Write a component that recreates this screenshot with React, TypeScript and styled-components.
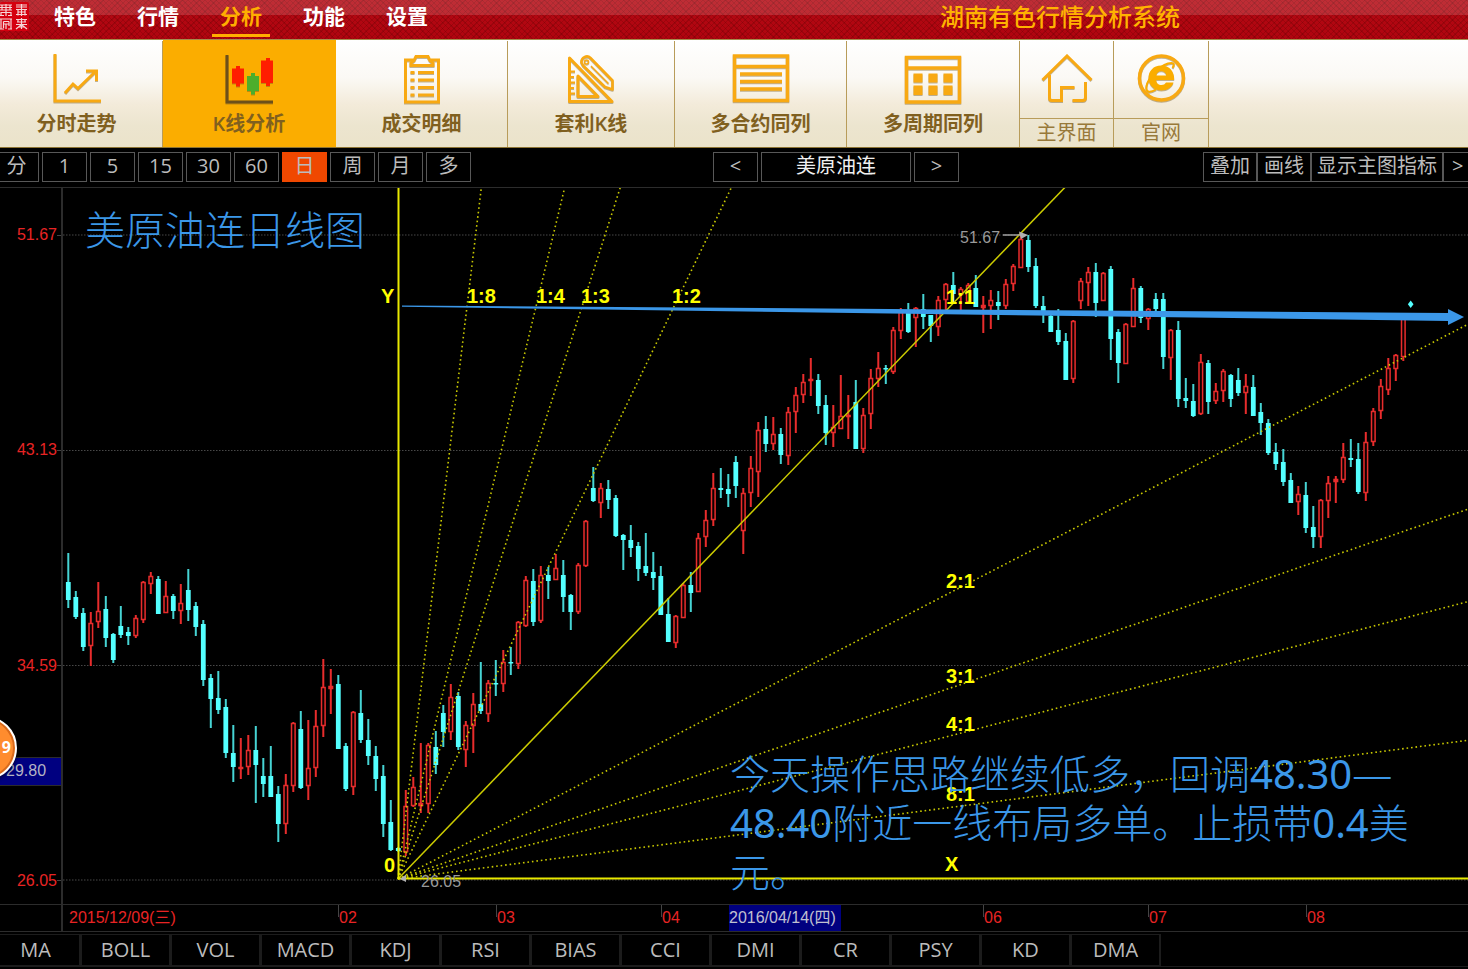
import React from 'react';
import styled, { createGlobalStyle, css } from 'styled-components';

const GlobalStyle = createGlobalStyle`
  * { box-sizing: border-box; }
  body {
    margin: 0;
    background: #000;
    font-family: "Open Sans", "Noto Sans CJK SC", sans-serif;
    font-size: 20px;
  }
  button { font: inherit; margin: 0; padding: 0; cursor: pointer; white-space: nowrap; }
`;

const GOLD = '#f8a913';
const GOLD_LINE = '#b89c5a';
const FRAME = '#2c2c2c';
const ANNOTATION = '#3b97e8';

/* ---------- layout ---------- */

const Page = styled.div`
  position: relative;
  min-height: 100vh;
  overflow: hidden;
  background: #000;
  display: flex;
  flex-direction: column;
`;

const Header = styled.header`
  height: 40px;
  display: flex;
  align-items: flex-start;
  border-bottom: 1px solid #a58c4c;
  background:
    linear-gradient(to bottom, rgba(255, 255, 255, 0.14) 0 15px, transparent 15px),
    repeating-linear-gradient(45deg, rgba(80, 0, 0, 0.22) 0 1px, transparent 1px 4px),
    repeating-linear-gradient(-45deg, rgba(80, 0, 0, 0.22) 0 1px, transparent 1px 4px),
    linear-gradient(to bottom, #b40a14, #b0040f);
`;

const Nav = styled.nav`
  display: flex;
  gap: 25px;
  margin-left: 16px;
`;

const NavLink = styled.a<{ $active?: boolean }>`
  width: 58px;
  height: 37px;
  line-height: 32px;
  text-align: center;
  text-decoration: none;
  font-size: 21px;
  font-weight: 700;
  color: ${p => (p.$active ? '#ffae00' : '#fff')};
  border-bottom: 3px solid ${p => (p.$active ? '#ffae00' : 'transparent')};
`;

const SystemTitle = styled.h1`
  margin: 0 288px 0 auto;
  font-size: 24px;
  line-height: 34px;
  font-weight: 500;
  color: #ffb300;
`;

const Toolbar = styled.div`
  height: 108px;
  padding-top: 1px;
  display: flex;
  background: linear-gradient(to bottom, #fff 0%, #fbf9f5 35%, #f3ebda 60%, #ece5cf 80%, #ebe3ca 100%);
  border-bottom: 1px solid #8d7433;
`;

const ToolGroup = styled.div`
  display: flex;
  margin-left: -9px;
`;

const Tool = styled.button<{ $width: number; $active?: boolean }>`
  width: ${p => p.$width}px;
  padding-top: 13px;
  display: flex;
  flex-direction: column;
  align-items: center;
  border: 0;
  border-right: 1px solid ${GOLD_LINE};
  background: ${p => (p.$active ? '#fbad00' : 'transparent')};
  color: #80601f;
  font-weight: 600;
  line-height: 40px;
  ${p => p.$active && css`margin-top: -1px; padding-top: 14px; border-color: #fbad00;`}
`;

const LinkTool = styled.button<{ $width: number }>`
  width: ${p => p.$width}px;
  display: flex;
  flex-direction: column;
  border: 0;
  border-right: 1px solid ${GOLD_LINE};
  background: transparent;
  color: #98793a;
`;

const LinkIcon = styled.span`
  height: 79px;
  width: 100%;
  padding-top: 13px;
  display: flex;
  justify-content: center;
  border-bottom: 1px solid ${GOLD_LINE};
`;

const LinkLabel = styled.span`
  width: 100%;
  line-height: 28px;
`;

const Icon = styled.svg`
  display: block;
  flex: none;
  height: 50px;
  fill: none;
  stroke: ${GOLD};
  filter: drop-shadow(0 1px 0 rgba(120, 90, 30, 0.45));
`;

const PeriodBar = styled.div`
  height: 39px;
  padding-top: 4px;
  display: flex;
`;

const ButtonGroup = styled.div<{ $gap: number }>`
  display: flex;
  gap: ${p => p.$gap}px;
`;

const PeriodGroup = styled(ButtonGroup)`
  margin-left: -6px;
`;

const SymbolGroup = styled(ButtonGroup)`
  margin-left: 242px;
`;

const OptionGroup = styled(ButtonGroup)`
  margin-left: auto;
`;

const BoxButton = styled.button<{ $width?: number; $active?: boolean; $bright?: boolean }>`
  width: ${p => p.$width ?? 45}px;
  height: 30px;
  padding-bottom: 2px;
  line-height: 24px;
  overflow: hidden;
  border: 1px solid ${p => (p.$active ? '#f04800' : '#585858')};
  background: ${p => (p.$active ? '#f04800' : '#000')};
  color: ${p => (p.$bright ? '#f0f0f0' : '#bcbcbc')};
`;

const MoreButton = styled(BoxButton)`
  border-right: 0;
  padding-left: 8px;
  text-align: left;
`;

const ChartArea = styled.main`
  display: grid;
  grid-template-columns: 63px minmax(0, 1fr);
  grid-template-rows: 716px 27px;
  border-top: 1px solid ${FRAME};
  border-bottom: 1px solid ${FRAME};
  font-family: "Liberation Sans", "Noto Sans CJK SC", sans-serif;
  font-size: 16px;
  color: #e82424;
`;

const PriceAxis = styled.div`
  position: relative;
  padding: 37px 0 13px;
  display: flex;
  flex-direction: column;
  justify-content: space-between;
  border-right: 2px solid ${FRAME};
`;

const PriceLabel = styled.div`
  height: 20px;
  display: flex;
  align-items: center;
  justify-content: flex-end;
  &::after {
    content: '';
    width: 4px;
    height: 1px;
    background: #444;
  }
`;

const PriceMarker = styled.div`
  position: absolute;
  left: 0;
  right: 0;
  top: 569px;
  height: 29px;
  padding-left: 6px;
  line-height: 26px;
  background: #000080;
  border-top: 1px solid ${FRAME};
  border-bottom: 1px solid ${FRAME};
  color: #b4b4c4;
`;

const Plot = styled.div`
  position: relative;
  overflow: hidden;
`;

const PlotSvg = styled.svg`
  display: block;
  width: 100%;
  height: 100%;
`;

const Annotation = styled.p<{ $left: number; $top: number }>`
  position: absolute;
  left: ${p => p.$left}px;
  top: ${p => p.$top}px;
  margin: 0;
  font-family: "Noto Sans", "Noto Sans CJK SC", sans-serif;
  font-size: 40px;
  font-weight: 300;
  line-height: 49px;
  white-space: nowrap;
  color: ${ANNOTATION};
`;

const Figure = styled.span`
  font-weight: 400;
`;

const AxisCorner = styled.div`
  border-top: 1px solid ${FRAME};
  border-right: 2px solid ${FRAME};
`;

const DateAxis = styled.div`
  display: grid;
  grid-template-columns: 275px 158px 165px 68px 254px 165px 158px minmax(0, 1fr);
  overflow: hidden;
  border-top: 1px solid ${FRAME};
  line-height: 26px;
`;

const DateCell = styled.div<{ $tick?: boolean }>`
  padding-left: ${p => (p.$tick ? 1 : 6)}px;
  background: ${p => (p.$tick ? `linear-gradient(#444, #444) 0 0 / 1px 12px no-repeat` : 'none')};
`;

const SelectedDate = styled.span`
  display: block;
  width: 112px;
  background: #000080;
  color: #c0c0d0;
`;

const IndicatorBar = styled.div`
  padding: 2px 0 0;
  display: flex;
  border-bottom: 1px solid #1c1c1c;
`;

const IndicatorGroup = styled.div`
  display: flex;
  margin-left: -9px;
`;

const IndicatorButton = styled.button`
  width: 90px;
  height: 32px;
  line-height: 28px;
  border: 1px solid #1c1c1c;
  border-right-width: 2px;
  background: #000;
  color: #bcbcbc;
`;

const FloatBadge = styled.button`
  position: absolute;
  left: -47px;
  top: 716px;
  width: 64px;
  height: 64px;
  padding: 0 4px 2px 0;
  text-align: right;
  border: 2px solid #fff;
  border-radius: 50%;
  background: #ff8c2e;
  box-shadow: inset 0 0 0 2px #d86a1c, 0 1px 4px rgba(0, 0, 0, 0.7);
  color: #fff;
  font-size: 16px;
  font-weight: 700;
`;

/* ---------- icons ---------- */

const SealLogo = () => (
  <svg width="30" height="32" viewBox="0 0 30 32" aria-hidden="true">
    <rect x="0" y="2" width="29" height="29" rx="2" fill="#d5000f" />
    <g stroke="#f6d6d8" strokeWidth="1.200" fill="none">
      <path d="M0 5H12M0 7.500H12M2 5V10M6 4V16M10 5V10M0 10H12M1 12.500H11M1 12V16M11 12V16M0 15.500H4M8 15.500H12" />
      <path d="M16 5H27M21.500 4V9M16 7H27M16 9.500H27M18 12H25M18 9.500V15.500M25 9.500V15.500M16 14.500H27M21.500 9.500V16" />
      <path d="M0 19H12M1 19V29M11 19V29M3.500 21.500H9M3.500 24H9M3.500 21.500V28M9 21.500V26M6 24V29M0 29H4M8 29H12" />
      <path d="M16 19.500H27M21.500 18V29M17 22H26M16 24.500H27M18 27H25M16 29L21 25M27 29L22 25M18 19V22M25 19V22" />
    </g>
  </svg>
);

const TrendIcon = () => (
  <Icon width="48" viewBox="0 0 48 50" strokeWidth="3">
    <path d="M2 0V47H48" />
    <path d="M12 39L20 30L25 34.500L42.500 17.500M33 17H43.500V27" />
  </Icon>
);

const CandleIcon = () => (
  <Icon width="48" viewBox="0 0 48 50" strokeWidth="2.500">
    <path d="M2 1V48H48" stroke="#6d501a" strokeWidth="3" />
    <g stroke="none">
      <path d="M11 12h4v2.500h4v15h-4v3h-4v-3h-4v-15h4z" fill="#ff1e00" />
      <path d="M26 19h4v3h4v15h-4v3.500h-4v-3.500h-4v-15h4z" fill="#4cae2c" />
      <path d="M41 4h4v2.500h3v22.500h-3v3h-4v-3h-5v-22.500h5z" fill="#ff1e00" />
    </g>
  </Icon>
);

const ClipboardIcon = () => (
  <Icon width="38" viewBox="0 0 38 50" strokeWidth="3">
    <path d="M10 6H2.500V48H35.500V6H28" />
    <path d="M13 2.500H25L27 6.500L30 9V11.500H8V9L11 6.500Z" />
    <path d="M7.500 18.500h4M15 18.500h16M7.500 26h4M15 26h16M7.500 33.500h4M15 33.500h16M7.500 41h4M15 41h16" />
  </Icon>
);

const RulerIcon = () => (
  <Icon width="48" viewBox="0 0 48 50" strokeWidth="3">
    <path d="M2.500 4V47.500H45Z" strokeLinejoin="round" />
    <path d="M11 22V42.500H31Z" strokeLinejoin="round" />
    <path d="M3 17.500h5M3 23h4M3 28.500h5M3 34h4M3 39.500h5" strokeWidth="2" />
    <path d="M14.500 8.500C14 3.500 20 0.500 23.500 4L45.500 26.500V35.500L38 33L16 11.500Z" strokeWidth="2.600" strokeLinejoin="round" />
    <circle cx="19.500" cy="8" r="2" strokeWidth="1.500" />
    <path d="M24 12L41.500 29.500" strokeWidth="1.500" />
  </Icon>
);

const ContractsIcon = () => (
  <Icon width="58" viewBox="0 0 58 50" strokeWidth="3.500">
    <path d="M2.500 2H55.500V46.500H2.500ZM2.500 12.500H55.500" />
    <path d="M8 20H50M8 27.500H50M8 35H50" />
  </Icon>
);

const PeriodsIcon = () => (
  <Icon width="58" viewBox="0 0 58 50" strokeWidth="3.500">
    <path d="M2.500 3.500H55.500V48H2.500ZM2.500 14H55.500" />
    <path d="M9.500 19.500h9v9h-9zM24.500 19.500h9v9h-9zM39.500 19.500h9v9h-9zM9.500 31.500h9v9.500h-9zM24.500 31.500h9v9.500h-9zM39.500 31.500h9v9.500h-9z" fill={GOLD} stroke="none" />
  </Icon>
);

const HomeIcon = () => (
  <Icon width="52" viewBox="0 0 52 50" strokeWidth="3">
    <path d="M1.500 26L26 2L50.500 26" />
    <path d="M8.500 21V44Q8.500 46.500 11 46.500H20.500V33.500H33.500" />
    <path d="M31.500 46.500H41.500Q44.500 46.500 44.500 43.500V28" />
  </Icon>
);

const ExplorerIcon = () => (
  <Icon width="50" viewBox="0 0 50 50">
    <circle cx="25.500" cy="24" r="22" strokeWidth="3.500" />
    <path
      d="M25 11.500C17.500 11.500 12.500 17 12.500 24C12.500 31.500 18 36.500 25.500 36.500C31.500 36.500 36 33 37.500 28.500H30C29 30.200 27.500 31 25.500 31C22.500 31 20.300 29.200 20.300 26H38.200C38.700 17.500 33.500 11.500 25 11.500ZM20.300 21.500C20.700 18.800 22.500 17.200 25.200 17.200C28 17.200 30 18.800 30.300 21.500Z"
      fill="#fbad00"
      stroke="none"
    />
    <path d="M36.500 14C39.500 9.500 37 8 32 9.500C22 13 12 24 10.500 32C9.500 38 13 39.500 20 35.500" strokeWidth="2" stroke="#fbad00" />
  </Icon>
);

/* ---------- chart ---------- */

type Candle = [kind: 'u' | 'd', high: number, top: number, bottom: number, low: number];

/* u = rising, d = falling; levels are vertical positions in the plot's own units */
const CANDLES: Candle[] = [
  ['d', 553, 582, 600, 608], ['d', 591, 597, 617, 619], ['d', 608, 613, 647, 651], ['u', 612, 623, 646, 666],
  ['u', 582, 611, 622, 628], ['d', 596, 609, 638, 647], ['d', 633, 634, 660, 663], ['d', 606, 626, 635, 638],
  ['d', 627, 632, 636, 645], ['u', 615, 618, 636, 638], ['u', 581, 582, 620, 623], ['u', 572, 576, 584, 594],
  ['d', 576, 579, 614, 614], ['u', 581, 596, 613, 613], ['d', 594, 596, 611, 619], ['u', 584, 603, 611, 624],
  ['d', 569, 590, 610, 621], ['d', 602, 606, 627, 636], ['d', 620, 624, 680, 686], ['d', 674, 678, 699, 728],
  ['d', 671, 698, 710, 714], ['d', 699, 707, 753, 758], ['d', 725, 753, 767, 782], ['u', 738, 767, 768, 779],
  ['u', 735, 750, 767, 775], ['d', 726, 750, 765, 803], ['d', 758, 776, 784, 797], ['d', 746, 776, 797, 797],
  ['d', 786, 794, 824, 842], ['u', 774, 785, 824, 834], ['u', 722, 723, 786, 792], ['d', 711, 729, 788, 789],
  ['u', 720, 768, 786, 800], ['u', 710, 726, 768, 777], ['u', 659, 687, 726, 737], ['u', 669, 686, 689, 714],
  ['d', 675, 684, 749, 749], ['d', 743, 746, 789, 791], ['u', 711, 712, 787, 795], ['d', 690, 713, 740, 743],
  ['d', 719, 740, 756, 765], ['d', 746, 756, 779, 791], ['d', 765, 776, 824, 837], ['d', 800, 822, 850, 851],
  ['d', 847, 848, 851, 852], ['u', 790, 806, 852, 856], ['u', 777, 787, 806, 807], ['u', 743, 803, 806, 813],
  ['u', 743, 745, 804, 813], ['d', 731, 747, 765, 774], ['d', 705, 713, 732, 747], ['u', 684, 697, 732, 740],
  ['d', 692, 696, 747, 750], ['u', 721, 725, 750, 767], ['u', 693, 704, 726, 753], ['d', 662, 704, 711, 714],
  ['u', 680, 683, 714, 722], ['d', 660, 683, 684, 696], ['u', 650, 662, 684, 692], ['d', 647, 662, 663, 675],
  ['u', 621, 622, 664, 669], ['u', 576, 580, 626, 627], ['d', 569, 581, 622, 626], ['u', 566, 575, 621, 623],
  ['d', 567, 575, 581, 599], ['u', 554, 568, 580, 580], ['d', 560, 575, 597, 612], ['d', 594, 595, 612, 630],
  ['u', 563, 565, 612, 614], ['u', 520, 521, 566, 567], ['d', 467, 488, 501, 502], ['u', 483, 488, 503, 518],
  ['d', 480, 489, 500, 509], ['d', 495, 498, 536, 537], ['d', 534, 535, 540, 570], ['d', 525, 540, 548, 557],
  ['d', 542, 546, 569, 581], ['d', 533, 566, 573, 576], ['d', 552, 572, 578, 590], ['d', 566, 576, 615, 615],
  ['d', 598, 614, 642, 642], ['u', 615, 616, 643, 648], ['u', 583, 585, 618, 618], ['d', 572, 585, 593, 612],
  ['u', 533, 538, 592, 592], ['u', 510, 520, 537, 547], ['u', 473, 488, 520, 526], ['d', 468, 488, 490, 498],
  ['d', 474, 489, 494, 507], ['d', 456, 462, 486, 498], ['u', 488, 493, 531, 554], ['u', 456, 468, 493, 507],
  ['u', 422, 430, 472, 497], ['d', 416, 429, 444, 452], ['u', 417, 434, 444, 450], ['d', 428, 434, 455, 464],
  ['u', 407, 412, 456, 465], ['u', 387, 395, 412, 433], ['u', 374, 382, 395, 403], ['u', 358, 379, 381, 396],
  ['d', 374, 380, 406, 414], ['d', 395, 405, 433, 445], ['u', 405, 427, 433, 447], ['u', 375, 416, 429, 429],
  ['u', 395, 415, 417, 439], ['d', 380, 402, 449, 449], ['u', 408, 415, 449, 453], ['u', 369, 378, 414, 429],
  ['u', 352, 368, 379, 387], ['d', 365, 368, 369, 384], ['u', 327, 330, 372, 374], ['u', 308, 312, 331, 339],
  ['d', 303, 313, 332, 333], ['u', 307, 308, 318, 347], ['d', 294, 309, 317, 329], ['d', 315, 315, 326, 342],
  ['u', 296, 300, 327, 336], ['u', 283, 284, 300, 310], ['d', 272, 285, 294, 303], ['u', 287, 289, 295, 310],
  ['u', 283, 285, 302, 302], ['d', 275, 288, 307, 307], ['u', 296, 305, 308, 333], ['u', 290, 300, 306, 329],
  ['d', 291, 302, 306, 320], ['u', 279, 284, 306, 309], ['u', 264, 266, 284, 291], ['u', 233, 239, 268, 268],
  ['d', 235, 240, 267, 272], ['d', 258, 266, 306, 308], ['d', 296, 306, 312, 323], ['d', 313, 316, 332, 332],
  ['d', 309, 330, 342, 345], ['d', 333, 341, 380, 380], ['u', 320, 321, 379, 383], ['u', 278, 281, 301, 309],
  ['u', 267, 272, 283, 306], ['d', 263, 272, 303, 317], ['u', 272, 273, 301, 301], ['d', 266, 269, 339, 360],
  ['d', 329, 332, 363, 383], ['u', 323, 324, 364, 364], ['u', 278, 288, 327, 327], ['d', 286, 288, 318, 323],
  ['u', 308, 309, 319, 330], ['d', 293, 299, 309, 311], ['d', 293, 299, 357, 369], ['u', 329, 330, 358, 380],
  ['d', 321, 330, 399, 407], ['d', 378, 398, 401, 408], ['d', 384, 401, 416, 417], ['u', 354, 362, 414, 415],
  ['d', 360, 363, 402, 414], ['u', 383, 391, 401, 404], ['u', 369, 371, 391, 402], ['d', 374, 375, 399, 407],
  ['d', 368, 380, 393, 396], ['u', 374, 386, 393, 414], ['d', 375, 387, 416, 416], ['d', 403, 412, 423, 435],
  ['d', 419, 423, 453, 455], ['d', 443, 452, 464, 470], ['d', 449, 462, 482, 486], ['d', 473, 480, 503, 503],
  ['u', 486, 494, 502, 515], ['d', 482, 495, 528, 533], ['d', 506, 527, 537, 548], ['u', 499, 500, 537, 548],
  ['u', 476, 483, 501, 518], ['u', 476, 479, 482, 503], ['u', 443, 457, 480, 483], ['d', 439, 458, 460, 467],
  ['d', 443, 459, 492, 494], ['u', 432, 442, 493, 501], ['u', 408, 411, 442, 446], ['u', 379, 386, 411, 419],
  ['u', 358, 368, 390, 395], ['u', 354, 355, 369, 381], ['u', 317, 317, 357, 361],
];

const FIRST_X = 68.3;
const STEP = 7.5;
const RISE = '#e82c2c';

const CandleMark = ({ candle, index }: { candle: Candle; index: number }) => {
  const [kind, high, top, bottom, low] = candle;
  const x = FIRST_X + STEP * index;
  const height = Math.max(bottom - top, 1.5);
  if (kind === 'd') {
    return (
      <g>
        <path d={`M${x} ${high}V${low}`} stroke="#46d4d4" strokeWidth="2" />
        <rect x={x - 2.4} y={top} width="4.800" height={height} fill="#54ffff" />
      </g>
    );
  }
  return (
    <g stroke={RISE} strokeWidth="1.500">
      <path d={`M${x} ${high}V${top}M${x} ${bottom}V${low}`} strokeWidth="2" />
      <rect
        x={x - 1.8}
        y={top + 0.5}
        width="3.600"
        height={Math.max(height - 1, 1)}
        fill={height < 4 ? RISE : '#100000'}
      />
    </g>
  );
};

const ORIGIN_X = 398;
const ORIGIN_Y = 879;
const UNIT_SLOPE = 1.037;
const FAR = 4000;
const STEEP_RATIOS = [2, 3, 4, 8];

const RATIO_LABELS: [string, number, number][] = [
  ['Y', 381, 303], ['1:8', 467, 303], ['1:4', 536, 303], ['1:3', 581, 303], ['1:2', 672, 303], ['1:1', 946, 304],
  ['2:1', 946, 588], ['3:1', 946, 683], ['4:1', 946, 731], ['8:1', 946, 801], ['X', 945, 871], ['0', 384, 872],
];

const fanLine = (slope: number) => {
  const dx = slope > 1 ? 1000 / slope : FAR;
  return `M${ORIGIN_X} ${ORIGIN_Y}L${ORIGIN_X + dx} ${ORIGIN_Y - dx * slope}`;
};

const CandleChart = () => (
  <PlotSvg role="img" aria-label="美原油连日线图">
    <g transform="translate(-63 -188)" fill="none">
      {[235, 450.5, 665.5, 880].map(y => (
        <path key={y} d={`M63 ${y}H${FAR}`} stroke="#484848" strokeWidth="1" strokeDasharray="1.500 1.500" />
      ))}
      {CANDLES.map((candle, i) => (
        <CandleMark key={i} candle={candle} index={i} />
      ))}
      <path d="M1410.700 300.500l2.800 3.800l-2.800 3.800l-2.800 -3.800z" fill="#54ffff" />

      <g stroke="#c8c800" strokeWidth="1.600" strokeDasharray="1.600 2.900">
        {STEEP_RATIOS.map(r => (
          <React.Fragment key={r}>
            <path d={fanLine(UNIT_SLOPE * r)} />
            <path d={fanLine(UNIT_SLOPE / r)} />
          </React.Fragment>
        ))}
      </g>
      <path d={fanLine(UNIT_SLOPE)} stroke="#cccc00" strokeWidth="1.500" />
      <path d={`M398.500 0V878.500H${FAR}`} stroke="#e8e800" strokeWidth="2" />

      <g fill="#9a9a9a" fontFamily="Liberation Sans, sans-serif" fontSize="16">
        <text x="960" y="243">51.67</text>
        <text x="421" y="887">26.05</text>
      </g>
      <path d="M1003 235H1026" stroke="#a0a0a0" strokeWidth="1.500" />
      <path d="M1019 231.500L1028 235L1021 239Z" fill="#b0b0b0" />
      <path d="M400 879L406 874.500V882Z" fill="#b0b0b0" />

      <g fill="#ffff00" fontFamily="Liberation Sans, sans-serif" fontSize="20" fontWeight="700">
        {RATIO_LABELS.map(([label, x, y]) => (
          <text key={label} x={x} y={y}>{label}</text>
        ))}
      </g>
      <path d="M402 305.500L1448 313V309L1464 317L1448 325V321L402 306.800Z" fill={ANNOTATION} />
    </g>
  </PlotSvg>
);

/* ---------- page ---------- */

const NAV = ['特色', '行情', '分析', '功能', '设置'];
const PERIODS = ['分', '1', '5', '15', '30', '60', '日', '周', '月', '多'];
const INDICATORS = ['MA', 'BOLL', 'VOL', 'MACD', 'KDJ', 'RSI', 'BIAS', 'CCI', 'DMI', 'CR', 'PSY', 'KD', 'DMA'];
const TOOLS = [
  { label: '分时走势', width: 172, icon: <TrendIcon /> },
  { label: 'K线分析', width: 173, icon: <CandleIcon />, active: true },
  { label: '成交明细', width: 172, icon: <ClipboardIcon /> },
  { label: '套利K线', width: 167, icon: <RulerIcon /> },
  { label: '多合约同列', width: 172, icon: <ContractsIcon /> },
  { label: '多周期同列', width: 173, icon: <PeriodsIcon /> },
];

export default function App() {
  return (
    <Page>
      <GlobalStyle />
      <Header>
        <SealLogo />
        <Nav>
          {NAV.map(item => (
            <NavLink key={item} href="#" $active={item === '分析'}>{item}</NavLink>
          ))}
        </Nav>
        <SystemTitle>湖南有色行情分析系统</SystemTitle>
      </Header>

      <Toolbar>
        <ToolGroup>
          {TOOLS.map(tool => (
            <Tool key={tool.label} type="button" $width={tool.width} $active={tool.active}>
              {tool.icon}
              {tool.label}
            </Tool>
          ))}
          <LinkTool type="button" $width={94}>
            <LinkIcon><HomeIcon /></LinkIcon>
            <LinkLabel>主界面</LinkLabel>
          </LinkTool>
          <LinkTool type="button" $width={95}>
            <LinkIcon><ExplorerIcon /></LinkIcon>
            <LinkLabel>官网</LinkLabel>
          </LinkTool>
        </ToolGroup>
      </Toolbar>

      <PeriodBar>
        <PeriodGroup $gap={3}>
          {PERIODS.map(period => (
            <BoxButton key={period} type="button" $active={period === '日'}>{period}</BoxButton>
          ))}
        </PeriodGroup>
        <SymbolGroup $gap={3}>
          <BoxButton type="button" aria-label="上一个">&lt;</BoxButton>
          <BoxButton type="button" $width={150} $bright>美原油连</BoxButton>
          <BoxButton type="button" aria-label="下一个">&gt;</BoxButton>
        </SymbolGroup>
        <OptionGroup $gap={0}>
          <BoxButton type="button" $width={54}>叠加</BoxButton>
          <BoxButton type="button" $width={54}>画线</BoxButton>
          <BoxButton type="button" $width={132}>显示主图指标</BoxButton>
          <MoreButton type="button" $width={25}>&gt;</MoreButton>
        </OptionGroup>
      </PeriodBar>

      <ChartArea>
        <PriceAxis>
          <PriceLabel>51.67</PriceLabel>
          <PriceLabel>43.13</PriceLabel>
          <PriceLabel>34.59</PriceLabel>
          <PriceLabel>26.05</PriceLabel>
          <PriceMarker>29.80</PriceMarker>
        </PriceAxis>
        <Plot>
          <CandleChart />
          <Annotation $left={22} $top={17}>美原油连日线图</Annotation>
          <Annotation $left={667} $top={561}>
            今天操作思路继续低多，回调<Figure>48.30</Figure>—<br />
            <Figure>48.40</Figure>附近一线布局多单。止损带<Figure>0.4</Figure>美<br />
            元。
          </Annotation>
        </Plot>
        <AxisCorner />
        <DateAxis>
          <DateCell>2015/12/09(三)</DateCell>
          <DateCell $tick>02</DateCell>
          <DateCell $tick>03</DateCell>
          <DateCell $tick>04</DateCell>
          <SelectedDate>2016/04/14(四)</SelectedDate>
          <DateCell $tick>06</DateCell>
          <DateCell $tick>07</DateCell>
          <DateCell $tick>08</DateCell>
        </DateAxis>
      </ChartArea>

      <IndicatorBar>
        <IndicatorGroup>
          {INDICATORS.map(name => (
            <IndicatorButton key={name} type="button">{name}</IndicatorButton>
          ))}
        </IndicatorGroup>
      </IndicatorBar>

      <FloatBadge type="button">9</FloatBadge>
    </Page>
  );
}
